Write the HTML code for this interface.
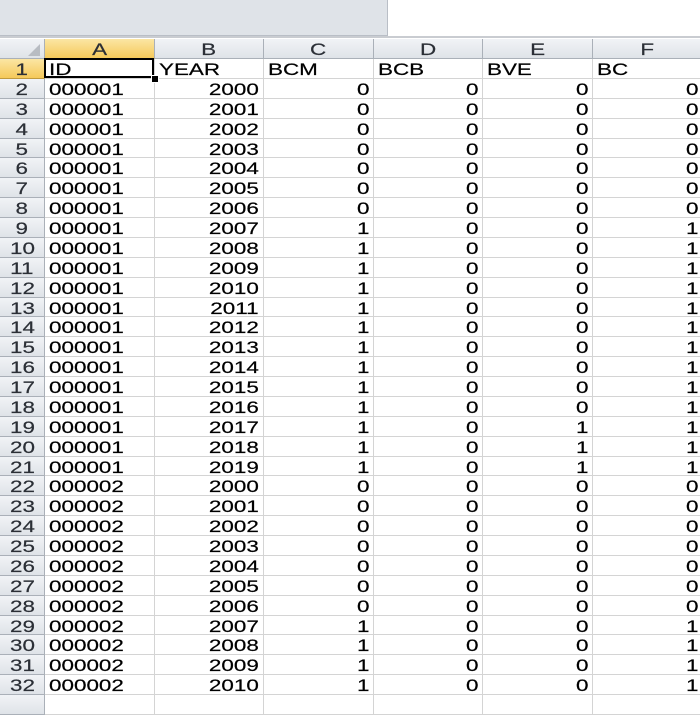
<!DOCTYPE html>
<html><head><meta charset="utf-8">
<style>
body{margin:0;width:700px;height:700px;overflow:hidden;background:#fff;font-family:"Liberation Sans",Arial,sans-serif;position:relative}
.top{position:absolute;left:0;top:0;width:387px;height:35px;background:#dfe3e8;border-right:1px solid #b9bec6;border-bottom:1px solid #b9bec6}
.sep{position:absolute;left:0;top:36px;width:700px;height:2px;background:#c9ccd1}
.c{position:absolute;box-sizing:border-box;border-right:1px solid #d4d4d4;border-bottom:1px solid #d4d4d4;font-size:17px;line-height:21px;color:#000;white-space:nowrap;overflow:hidden;-webkit-text-stroke:0.2px #000}
.c span{display:inline-block;transform:scaleX(1.32)}
.h{background:linear-gradient(#f1f3f6,#dfe3e8);border-right:1px solid #aab0b8;border-bottom:1px solid #aab0b8;color:#2b2f36;text-align:center;-webkit-text-stroke:0.2px #2b2f36}
.h span{transform-origin:center}
.hs{background:linear-gradient(#fbe6a4,#f5c95a);border-right:1px solid #aab0b8;border-bottom:1px solid #c09a3e}
.r{text-align:right;padding-right:4px}
.r span{transform-origin:right}
.l{padding-left:4px}
.l span{transform-origin:left}
</style></head><body>
<div class="top"></div><div class="sep"></div>
<div id="g"></div>
<script>
var cx=[0,45,155,264,374,483,593,703];
var top0=39,hh=20,rh=19.875,y1=59;
var h='';
function cell(x0,x1,y0,y,cls,t,raw){h+='<div class="c '+cls+'" style="left:'+x0+'px;width:'+(x1-x0)+'px;top:'+y0+'px;height:'+(y)+'px">'+(raw?t:(t===''?'':'<span>'+t+'</span>'))+'</div>';}
cell(0,45,top0,hh,'h','<svg width="45" height="20" style="position:absolute;left:0;top:0"><polygon points="40,5 40,17 28,17" fill="#b8bcc2"/></svg>',true);
var L=['A','B','C','D','E','F'];
for(var i=0;i<6;i++)cell(cx[i+1],cx[i+2],top0,hh,i==0?'h hs':'h',L[i]);
for(var r=1;r<=33;r++){
 var y0=Math.round(y1+(r-1)*rh),y2=Math.round(y1+r*rh),ht=y2-y0;
 cell(0,45,y0,ht,r==1?'h hs':'h',r<=32?r:'');
 var row;
 if(r==1)row=['ID','YEAR','BCM','BCB','BVE','BC'];
 else if(r<=32){var k=r-2,id=k<20?'000001':'000002',yr=2000+(k<20?k:k-20);
  var c=yr>=2007?1:0,e=(yr>=2017)?1:0;row=[id,yr,c,0,e,c];}
 else row=['','','','','',''];
 for(var i=0;i<6;i++){var cls=(r==1||i==0)?'l':'r';cell(cx[i+1],cx[i+2],y0,ht,cls,row[i]);}
}
h+='<div style="position:absolute;left:44px;top:58px;width:110px;height:20px;box-sizing:border-box;border:2px solid #000"></div><div style="position:absolute;left:151px;top:75px;width:6px;height:6px;background:#000;border:1px solid #fff"></div>';
document.getElementById('g').innerHTML=h;
</script>
</body></html>
